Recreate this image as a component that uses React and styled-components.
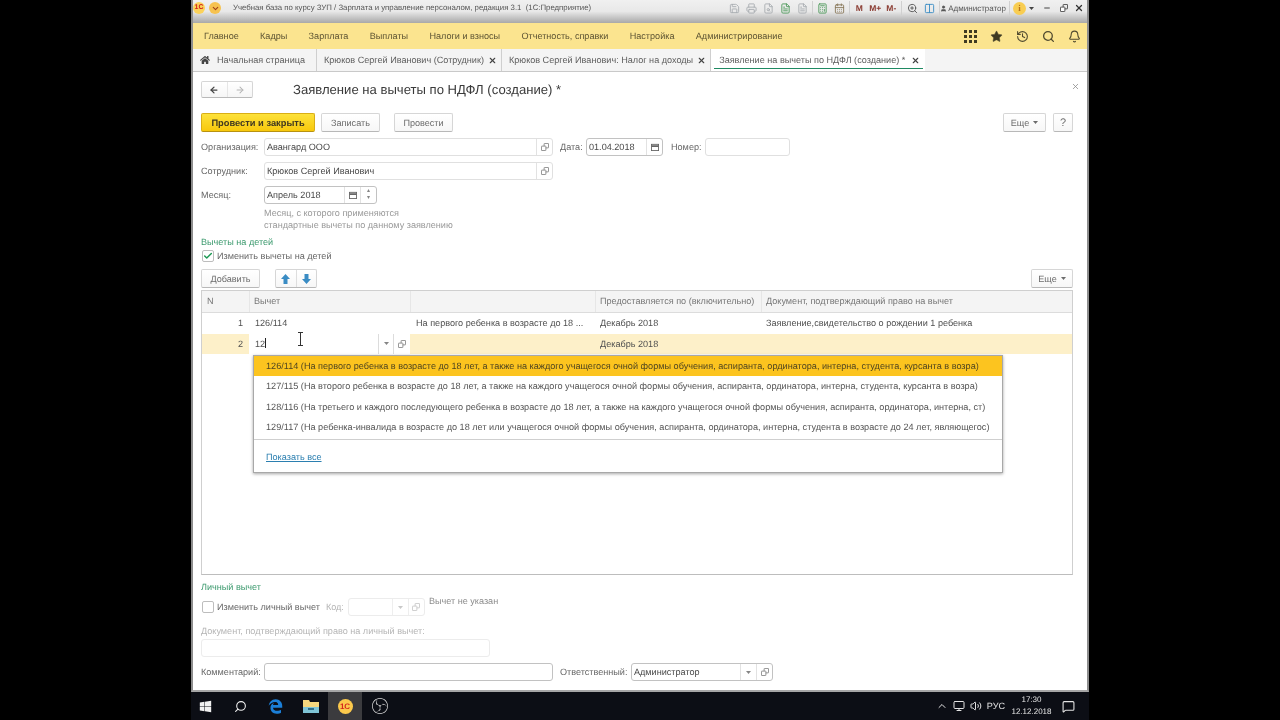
import React from "react";
import styled, { createGlobalStyle } from "styled-components";
import {
  Star, History, Search, Bell, ChevronUp, Check, X, Printer, Save, FileSearch, FileText, ArrowLeft, ArrowRight,
  Calculator, CalendarDays, ZoomIn, Columns2, User, Minus, Volume2, Monitor, MessageSquare, ChevronDown,
} from "lucide-react";
import { FaWindows, FaHome } from "react-icons/fa";
import { FaEdgeLegacy } from "react-icons/fa6";
import { SiObsstudio } from "react-icons/si";

const GlobalStyle = createGlobalStyle`
  html, body { margin: 0; padding: 0; background: #000; }
  body {
    font-family: "Liberation Sans", Arial, sans-serif;
    font-size: 9.1px;
    color: #4c4c4c;
    text-rendering: geometricPrecision;
  }
`;

const Page = styled.div`
  width: 1280px;
  height: 720px;
  background: #000;
  display: flex;
  justify-content: center;
  overflow: hidden;
`;
const Screen = styled.div`
  width: 898px;
  height: 720px;
  display: flex;
  flex-direction: column;
  background: #fff;
  filter: blur(0.35px);
`;
const Window = styled.div`
  flex: 1;
  display: flex;
  flex-direction: column;
  border-left: 2px solid #8d8d8d;
  border-right: 2px solid #8d8d8d;
  border-bottom: 2px solid #a6a6a6;
  min-height: 0;
`;

/* title bar */
const TitleBar = styled.div`
  height: 23px;
  display: flex;
  align-items: flex-start;
  padding: 1px 0 0 0;
  box-sizing: border-box;
  background: linear-gradient(180deg, #f0f0f0 0%, #e8e8e8 50%, #a8a8a8 100%);
`;
const Logo = styled.div`
  width: 12px;
  height: 12px;
  border-radius: 50%;
  margin: 1px 0 0 0;
  background: #fbd25a;
  color: #d3241c;
  font-size: 7px;
  font-weight: bold;
  line-height: 12px;
  text-align: center;
`;
const MenuBall = styled.div`
  width: 12px;
  height: 12px;
  margin: 1px 12px 0 4px;
  border-radius: 50%;
  background: #f6c24f;
  display: flex;
  align-items: center;
  justify-content: center;
  color: #a0401a;
`;
const TitleText = styled.div`
  font-size: 7.8px;
  line-height: 13px;
  color: #555;
  white-space: pre;
  flex: 1;
`;
const TopTools = styled.div`
  display: flex;
  align-items: center;
  height: 14px;
  color: #a9adb1;
`;
const ToolSlot = styled.div`
  width: ${(p) => p.$w || 17}px;
  display: flex;
  justify-content: center;
  align-items: center;
  color: ${(p) => p.$color || "inherit"};
  font-size: 8.5px;
  font-weight: bold;
`;
const ToolSep = styled.div`
  width: 1px;
  height: 14px;
  background: #d0d0d0;
  margin: 0 ${(p) => p.$m ?? 2}px;
`;
const UserName = styled.div`
  font-size: 8px;
  color: #555;
  display: flex;
  align-items: center;
  gap: 1px;
  white-space: nowrap;
`;
const InfoBall = styled.div`
  width: 13px;
  height: 13px;
  border-radius: 50%;
  background: #f8cd52;
  color: #b8741a;
  display: flex;
  align-items: center;
  justify-content: center;
  font-size: 9px;
  font-weight: bold;
  font-family: "Liberation Serif", serif;
`;

/* section menu */
const NavBar = styled.div`
  height: 26px;
  display: flex;
  align-items: center;
  padding: 0 6px 0 11px;
  background: #fbe48f;
  box-sizing: border-box;
`;
const NavItems = styled.div`
  flex: 1;
  display: flex;
  gap: 21.3px;
`;
const NavItem = styled.div`
  color: #5d5433;
  white-space: nowrap;
`;
const NavIcons = styled.div`
  display: flex;
  align-items: center;
  gap: 12px;
  color: #504a30;
`;
const NavIcon = styled.div`
  width: 14px;
  height: 14px;
  display: flex;
  align-items: center;
  justify-content: center;
`;

/* open tabs */
const TabBar = styled.div`
  height: 23px;
  display: flex;
  background: #f4f4f4;
  border-bottom: 1px solid #c9c9c9;
  box-sizing: border-box;
`;
const Tab = styled.div`
  position: relative;
  height: 22px;
  display: flex;
  align-items: center;
  padding: 0 ${(p) => p.$pr ?? 4}px 0 ${(p) => p.$pl ?? 7}px;
  gap: ${(p) => p.$gap ?? 4}px;
  border-right: 1px solid ${(p) => (p.$active ? "transparent" : "#cfcfcf")};
  background: ${(p) => (p.$active ? "#fff" : "transparent")};
  color: #5e5e5e;
  white-space: nowrap;
  ${(p) => p.$active && `&::after { content: ""; position: absolute; left: 3px; right: 1px; bottom: 2px; height: 1px; background: #1f8a62; }`}
`;
const TabClose = styled(X)`
  color: #444;
`;

/* form */
const Content = styled.div`
  position: relative;
  flex: 1;
  display: flex;
  flex-direction: column;
  padding: 0 14px 0 8px;
  background: #fff;
`;
const FormHeader = styled.div`
  margin-top: 9px;
  height: 17px;
  display: flex;
  align-items: center;
`;
const NavGroup = styled.div`
  width: 52px;
  height: 17px;
  display: flex;
  border: 1px solid #d6d6d6;
  border-bottom-color: #b9b9b9;
  border-radius: 2px;
  box-sizing: border-box;
  background: linear-gradient(#fff, #f6f6f6);
`;
const NavArrow = styled.div`
  flex: 1;
  display: flex;
  align-items: center;
  justify-content: center;
  color: ${(p) => (p.$off ? "#b4b4b4" : "#444")};
  & + & { border-left: 1px solid #e6e6e6; }
`;
const FormTitle = styled.div`
  margin-left: 40px;
  font-size: 13.1px;
  color: #3a3a3a;
  white-space: nowrap;
  flex: 1;
`;
const CloseForm = styled(X)`
  color: #888;
  margin: -6px -6.5px 0 0;
`;
const Toolbar = styled.div`
  margin-top: ${(p) => p.$mt ?? 15}px;
  height: 19px;
  display: flex;
  align-items: stretch;
  gap: ${(p) => p.$gap ?? 6}px;
`;
const Button = styled.div`
  box-sizing: border-box;
  width: ${(p) => p.$w}px;
  margin-left: ${(p) => p.$ml || 0}px;
  display: flex;
  align-items: center;
  justify-content: center;
  gap: 4px;
  border: 1px solid #d6d6d6;
  border-bottom-color: #b8b8b8;
  border-radius: 2px;
  background: linear-gradient(#fff, #f7f7f7);
  color: #6c6c6c;
  font-size: ${(p) => p.$fs || 9.1}px;
  white-space: nowrap;
`;
const PrimaryButton = styled(Button)`
  border-color: #d9ae15;
  border-bottom-color: #b89210;
  background: linear-gradient(#fde23a, #f8c80c);
  color: #403820;
  font-size: 9.3px;
  font-weight: bold;
`;
const Spacer = styled.div`
  flex: 1;
`;
const FieldRow = styled.div`
  margin-top: ${(p) => p.$mt ?? 6}px;
  height: ${(p) => p.$h || 18}px;
  display: flex;
  align-items: center;
`;
const Label = styled.div`
  width: ${(p) => (p.$w ? `${p.$w}px` : "auto")};
  margin-left: ${(p) => p.$ml || 0}px;
  color: ${(p) => (p.$off ? "#b5b5b5" : "#666")};
  white-space: nowrap;
`;
const borderColor = (p) => (p.$off ? "#ececec" : p.$light ? "#e0e0e0" : "#c2c2c2");
const Field = styled.div`
  box-sizing: border-box;
  width: ${(p) => p.$w}px;
  height: ${(p) => p.$h || 18}px;
  margin: ${(p) => p.$mt || 0}px 0 0 ${(p) => p.$ml || 0}px;
  display: flex;
  border: 1px solid ${borderColor};
  border-radius: 3px;
  background: #fff;
`;
const FieldValue = styled.div`
  flex: 1;
  padding-left: 2px;
  line-height: 16px;
  white-space: nowrap;
  overflow: hidden;
  color: #484848;
`;
const FieldCell = styled.div`
  width: ${(p) => p.$w || 15}px;
  display: flex;
  align-items: center;
  justify-content: center;
  border-left: 1px solid ${(p) => (p.$off ? "#eeeeee" : "#e2e2e2")};
  color: ${(p) => (p.$off ? "#c8c8c8" : "#858585")};
`;
const SpinCell = styled(FieldCell)`
  flex-direction: column;
  font-size: 6px;
  line-height: 7px;
`;
const Hint = styled.div`
  margin: 3px 0 0 63px;
  line-height: 12px;
  color: #999;
`;
const GroupTitle = styled.div`
  margin-top: ${(p) => p.$mt}px;
  line-height: 12px;
  color: #3c9a6e;
`;
const CheckRow = styled.div`
  margin-top: ${(p) => p.$mt ?? 0}px;
  height: ${(p) => p.$h || 12}px;
  display: flex;
  align-items: center;
  gap: 3px;
`;
const CheckBox = styled.div`
  box-sizing: border-box;
  width: 12px;
  height: 12px;
  margin-left: 1px;
  border: 1px solid #bdbdbd;
  border-radius: 2px;
  background: #fff;
  color: #1f9a55;
  display: flex;
  align-items: center;
  justify-content: center;
`;
const ArrowGroup = styled(Button)`
  padding: 0;
  gap: 0;
`;
const ArrowCell = styled.div`
  flex: 1;
  height: 100%;
  display: flex;
  align-items: center;
  justify-content: center;
  & + & { border-left: 1px solid #dedede; }
`;

/* table */
const Table = styled.div`
  position: relative;
  margin-top: 2px;
  height: 285px;
  box-sizing: border-box;
  border: 1px solid #cfcfcf;
  border-bottom-color: #bdbdbd;
`;
const TableRow = styled.div`
  display: grid;
  grid-template-columns: 47px 161px 185px 166px 1fr;
  height: ${(p) => p.$h || 20.5}px;
  background: ${(p) => p.$bg || "#fff"};
  border-bottom: ${(p) => (p.$line ? "1px solid #dcdcdc" : "none")};
`;
const HeadCell = styled.div`
  padding-left: ${(p) => (p.$first ? 5 : 4)}px;
  line-height: 20px;
  color: #777;
  white-space: nowrap;
  border-left: ${(p) => (p.$first ? "none" : "1px solid #e6e6e6")};
  background: #f4f4f4;
`;
const Cell = styled.div`
  padding: 0 ${(p) => (p.$right ? 6 : 0)}px 0 ${(p) => p.$pl ?? 5}px;
  text-align: ${(p) => (p.$right ? "right" : "left")};
  line-height: 20px;
  white-space: nowrap;
  overflow: hidden;
  color: #505050;
`;
const EditCell = styled.div`
  display: flex;
  background: #fff;
  height: 20px;
`;
const EditValue = styled.div`
  flex: 1;
  padding-left: 6px;
  line-height: 20px;
  color: #505050;
`;
const Caret = styled.span`
  display: inline-block;
  width: 1px;
  height: 10px;
  background: #222;
  vertical-align: -1px;
`;
const EditButton = styled.div`
  width: ${(p) => p.$w}px;
  border-left: 1px solid #dcdcdc;
  display: flex;
  align-items: center;
  justify-content: center;
  color: #858585;
`;
const TextCursor = styled.div`
  position: absolute;
  left: 95px;
  top: 41px;
  width: 7px;
  height: 14px;
  font-size: 0;
`;
const Dropdown = styled.div`
  position: absolute;
  left: 51px;
  top: 64px;
  width: 750px;
  height: 118px;
  box-sizing: border-box;
  background: #fff;
  border: 1px solid #a8a8a8;
  box-shadow: 0 1px 3px rgba(0, 0, 0, 0.35);
`;
const Option = styled.div`
  height: 20.4px;
  line-height: 20.4px;
  padding-left: 12px;
  font-size: 9.15px;
  white-space: nowrap;
  overflow: hidden;
  color: ${(p) => (p.$active ? "#4f4520" : "#555")};
  background: ${(p) => (p.$active ? "#fcc41f" : "transparent")};
`;
const DropFooter = styled.div`
  margin-top: 1.4px;
  border-top: 1px solid #cfcfcf;
  padding: 12px 0 0 12px;
`;
const ShowAll = styled.span`
  color: #2b7fb0;
  text-decoration: underline;
`;
const StatusText = styled.div`
  margin: -12px 0 0 1px;
  color: #8c8c8c;
`;

/* taskbar */
const Taskbar = styled.div`
  height: 28px;
  display: flex;
  align-items: stretch;
  background: #0c0e15;
  color: #e4e4e4;
  box-sizing: border-box;
`;
const TaskButton = styled.div`
  box-sizing: border-box;
  width: ${(p) => p.$w || 35}px;
  padding-right: ${(p) => p.$pr || 0}px;
  display: flex;
  align-items: center;
  justify-content: center;
  background: ${(p) => (p.$active ? "#3b3b3e" : "transparent")};
  color: ${(p) => p.$color || "#f0f0f0"};
`;
const Tray = styled.div`
  margin-left: auto;
  display: flex;
  align-items: center;
  gap: 5px;
  padding-right: 14.5px;
`;
const Clock = styled.div`
  margin: 0 4.5px 0 1px;
  font-size: 8px;
  line-height: 12px;
  text-align: center;
  width: 41px;
`;
const TaskLogo = styled(Logo)`
  width: 15px;
  height: 15px;
  margin: 0;
  font-size: 8px;
  line-height: 15px;
  background: #fbc94c;
`;

const PickIcon = ({ color = "currentColor" }) => (
  <svg width="8" height="8" viewBox="0 0 9 9" fill="none" stroke={color} strokeWidth="1">
    <rect x="3.5" y="0.5" width="5" height="5" rx="0.5" />
    <rect x="0.5" y="3.5" width="5" height="5" rx="0.5" fill="#fff" />
  </svg>
);
const Tri = () => (
  <svg width="5" height="3" viewBox="0 0 5 3" fill="currentColor"><path d="M0 0h5L2.5 3z" /></svg>
);
const CalIcon = () => (
  <svg width="8" height="8" viewBox="0 0 9 9" fill="none" stroke="#666" strokeWidth="1">
    <rect x="0.5" y="1.5" width="8" height="7" />
    <path d="M0.5 3.5h8" strokeWidth="2" />
  </svg>
);
const BlueArrow = ({ down }) => (
  <svg width="9" height="10" viewBox="0 0 9 10" fill="#3a8cc4" style={{ transform: down ? "rotate(180deg)" : "none" }}>
    <path d="M4.5 0L9 5H6.5v5h-4V5H0z" />
  </svg>
);
const GridIcon = () => (
  <svg width="13" height="13" viewBox="0 0 13 13" fill="#3f3a22">
    {[0, 5, 10].map((y) => [0, 5, 10].map((x) => <rect key={`${x}${y}`} x={x} y={y} width="3" height="3" />))}
  </svg>
);
const FolderIcon = () => (
  <svg width="16" height="14" viewBox="0 0 16 14">
    <path d="M0 1h6l1 2h9v11H0z" fill="#f5d77e" />
    <rect x="0" y="8" width="16" height="6" fill="#7fc4d6" />
    <rect x="5" y="9" width="6" height="2" fill="#2f6f8a" />
  </svg>
);
const IBeam = () => (
  <svg width="7" height="14" viewBox="0 0 7 14" fill="none" stroke="#333" strokeWidth="1">
    <path d="M1 .5h5M3.5 .5v13M1 13.5h5" />
  </svg>
);

const navItems = ["Главное", "Кадры", "Зарплата", "Выплаты", "Налоги и взносы", "Отчетность, справки", "Настройка", "Администрирование"];
const options = [
  "126/114 (На первого ребенка в возрасте до 18 лет, а также на каждого учащегося очной формы обучения, аспиранта, ординатора, интерна, студента, курсанта в возра)",
  "127/115 (На второго ребенка в возрасте до 18 лет, а также на каждого учащегося очной формы обучения, аспиранта, ординатора, интерна, студента, курсанта в возра)",
  "128/116 (На третьего и каждого последующего ребенка в возрасте до 18 лет, а также на каждого учащегося очной формы обучения, аспиранта, ординатора, интерна, ст)",
  "129/117 (На ребенка-инвалида в возрасте до 18 лет или учащегося очной формы обучения, аспиранта, ординатора, интерна, студента в возрасте до 24 лет, являющегос)",
];

export default function App() {
  return (
    <Page>
      <GlobalStyle />
      <Screen>
        <Window>
          <TitleBar>
            <Logo>1С</Logo>
            <MenuBall><ChevronDown size={9} strokeWidth={3} /></MenuBall>
            <TitleText>Учебная база по курсу ЗУП / Зарплата и управление персоналом, редакция 3.1  (1С:Предприятие)</TitleText>
            <TopTools>
              <ToolSlot><Save size={11} /></ToolSlot>
              <ToolSlot><Printer size={11} /></ToolSlot>
              <ToolSlot><FileSearch size={11} /></ToolSlot>
              <ToolSlot $color="#4f9a5c"><FileText size={11} /></ToolSlot>
              <ToolSlot><FileText size={11} /></ToolSlot>
              <ToolSep $m={1} />
              <ToolSlot $color="#4f9a5c"><Calculator size={11} /></ToolSlot>
              <ToolSlot $color="#8a7a5c"><CalendarDays size={11} /></ToolSlot>
              <ToolSep $m={1} />
              <ToolSlot $color="#8a3a30" $w={16}>M</ToolSlot>
              <ToolSlot $color="#8a3a30" $w={16}>M+</ToolSlot>
              <ToolSlot $color="#8a3a30" $w={16}>M-</ToolSlot>
              <ToolSep $m={2} />
              <ToolSlot $color="#555"><ZoomIn size={11} /></ToolSlot>
              <ToolSlot $color="#3a8cc4"><Columns2 size={11} /></ToolSlot>
              <ToolSep $m={0.5} />
              <UserName><User size={7} fill="#555" />Администратор</UserName>
              <ToolSep $m={3} />
              <InfoBall>i</InfoBall>
              <ToolSlot $w={11} $color="#444"><Tri /></ToolSlot>
              <ToolSlot $w={20} $color="#444"><Minus size={8} strokeWidth={3} /></ToolSlot>
              <ToolSlot $w={14} $color="#444"><PickIcon /></ToolSlot>
              <ToolSlot $w={16} $color="#333"><X size={10} strokeWidth={3} /></ToolSlot>
            </TopTools>
          </TitleBar>

          <NavBar>
            <NavItems>
              {navItems.map((n) => <NavItem key={n}>{n}</NavItem>)}
            </NavItems>
            <NavIcons>
              <NavIcon><GridIcon /></NavIcon>
              <NavIcon><Star size={13} fill="#3f3a22" strokeWidth={1} /></NavIcon>
              <NavIcon><History size={13} /></NavIcon>
              <NavIcon><Search size={13} strokeWidth={2.4} /></NavIcon>
              <NavIcon><Bell size={13} /></NavIcon>
            </NavIcons>
          </NavBar>

          <TabBar>
            <Tab $pl={7} $pr={11} $gap={7}><FaHome size={10} color="#444" />Начальная страница</Tab>
            <Tab>Крюков Сергей Иванович (Сотрудник)<TabClose size={9} strokeWidth={3} /></Tab>
            <Tab>Крюков Сергей Иванович: Налог на доходы<TabClose size={9} strokeWidth={3} /></Tab>
            <Tab $active $pl={8} $gap={6}>Заявление на вычеты по НДФЛ (создание) *<TabClose size={9} strokeWidth={3} /></Tab>
          </TabBar>

          <Content>
            <FormHeader>
              <NavGroup>
                <NavArrow><ArrowLeft size={10} strokeWidth={3} /></NavArrow>
                <NavArrow $off><ArrowRight size={10} strokeWidth={2.5} /></NavArrow>
              </NavGroup>
              <FormTitle>Заявление на вычеты по НДФЛ (создание) *</FormTitle>
              <CloseForm size={9} />
            </FormHeader>

            <Toolbar>
              <PrimaryButton $w={114}>Провести и закрыть</PrimaryButton>
              <Button $w={59}>Записать</Button>
              <Button $w={59} $ml={8}>Провести</Button>
              <Spacer />
              <Button $w={43}>Еще <Tri /></Button>
              <Button $w={20} $ml={1} $fs={11}>?</Button>
            </Toolbar>

            <FieldRow>
              <Label $w={63}>Организация:</Label>
              <Field $light $w={289}>
                <FieldValue>Авангард ООО</FieldValue>
                <FieldCell><PickIcon /></FieldCell>
              </Field>
              <Label $ml={7} $w={26}>Дата:</Label>
              <Field $w={77}>
                <FieldValue>01.04.2018</FieldValue>
                <FieldCell><CalIcon /></FieldCell>
              </Field>
              <Label $ml={8} $w={34}>Номер:</Label>
              <Field $light $w={85} />
            </FieldRow>
            <FieldRow>
              <Label $w={63}>Сотрудник:</Label>
              <Field $light $w={289}>
                <FieldValue>Крюков Сергей Иванович</FieldValue>
                <FieldCell><PickIcon /></FieldCell>
              </Field>
            </FieldRow>
            <FieldRow>
              <Label $w={63}>Месяц:</Label>
              <Field $w={113}>
                <FieldValue>Апрель 2018</FieldValue>
                <FieldCell><CalIcon /></FieldCell>
                <SpinCell><span>▴</span><span>▾</span></SpinCell>
              </Field>
            </FieldRow>
            <Hint>Месяц, с которого применяются<br />стандартные вычеты по данному заявлению</Hint>

            <GroupTitle $mt={5}>Вычеты на детей</GroupTitle>
            <CheckRow $mt={2}>
              <CheckBox><Check size={12} strokeWidth={3.5} /></CheckBox>
              <Label>Изменить вычеты на детей</Label>
            </CheckRow>

            <Toolbar $mt={7} $gap={15}>
              <Button $w={59}>Добавить</Button>
              <ArrowGroup $w={42}>
                <ArrowCell><BlueArrow /></ArrowCell>
                <ArrowCell><BlueArrow down /></ArrowCell>
              </ArrowGroup>
              <Spacer />
              <Button $w={42}>Еще <Tri /></Button>
            </Toolbar>

            <Table>
              <TableRow $h={21} $line>
                <HeadCell $first>N</HeadCell>
                <HeadCell>Вычет</HeadCell>
                <HeadCell />
                <HeadCell>Предоставляется по (включительно)</HeadCell>
                <HeadCell>Документ, подтверждающий право на вычет</HeadCell>
              </TableRow>
              <TableRow>
                <Cell $right>1</Cell>
                <Cell $pl={6}>126/114</Cell>
                <Cell $pl={6}>На первого ребенка в возрасте до 18 ...</Cell>
                <Cell>Декабрь 2018</Cell>
                <Cell>Заявление,свидетельство о рождении 1 ребенка</Cell>
              </TableRow>
              <TableRow $bg="#fdf0c9">
                <Cell $right>2</Cell>
                <EditCell>
                  <EditValue>12<Caret /></EditValue>
                  <EditButton $w={14}><Tri /></EditButton>
                  <EditButton $w={16}><PickIcon /></EditButton>
                </EditCell>
                <Cell />
                <Cell>Декабрь 2018</Cell>
                <Cell />
              </TableRow>
              <TextCursor><IBeam /></TextCursor>
              <Dropdown>
                {options.map((o, i) => <Option key={o} $active={i === 0}>{o}</Option>)}
                <DropFooter><ShowAll>Показать все</ShowAll></DropFooter>
              </Dropdown>
            </Table>

            <GroupTitle $mt={6}>Личный вычет</GroupTitle>
            <CheckRow $mt={5} $h={18}>
              <CheckBox />
              <Label>Изменить личный вычет</Label>
              <Label $off $ml={3}>Код:</Label>
              <Field $off $w={77} $h={18} $ml={1}>
                <FieldValue />
                <FieldCell $off><Tri /></FieldCell>
                <FieldCell $off><PickIcon /></FieldCell>
              </Field>
              <StatusText>Вычет не указан</StatusText>
            </CheckRow>
            <FieldRow $mt={9} $h={12}><Label $off>Документ, подтверждающий право на личный вычет:</Label></FieldRow>
            <Field $off $w={289} $h={18} $mt={2}><FieldValue /></Field>
            <FieldRow $mt={6}>
              <Label $w={63}>Комментарий:</Label>
              <Field $w={289} />
              <Label $ml={7} $w={71}>Ответственный:</Label>
              <Field $w={142}>
                <FieldValue>Администратор</FieldValue>
                <FieldCell><Tri /></FieldCell>
                <FieldCell><PickIcon /></FieldCell>
              </Field>
            </FieldRow>
          </Content>
        </Window>

        <Taskbar>
          <TaskButton $w={32} $pr={4}><FaWindows size={13} /></TaskButton>
          <TaskButton><Search size={13} style={{ transform: "scaleX(-1)" }} /></TaskButton>
          <TaskButton $color="#1b7fd8"><FaEdgeLegacy size={15} /></TaskButton>
          <TaskButton><FolderIcon /></TaskButton>
          <TaskButton $active $w={34}><TaskLogo>1С</TaskLogo></TaskButton>
          <TaskButton><SiObsstudio size={16} color="#d8d8d8" /></TaskButton>
          <Tray>
            <ChevronUp size={12} />
            <Monitor size={12} />
            <Volume2 size={12} />
            <span>РУС</span>
            <Clock>17:30<br />12.12.2018</Clock>
            <MessageSquare size={13} />
          </Tray>
        </Taskbar>
      </Screen>
    </Page>
  );
}
